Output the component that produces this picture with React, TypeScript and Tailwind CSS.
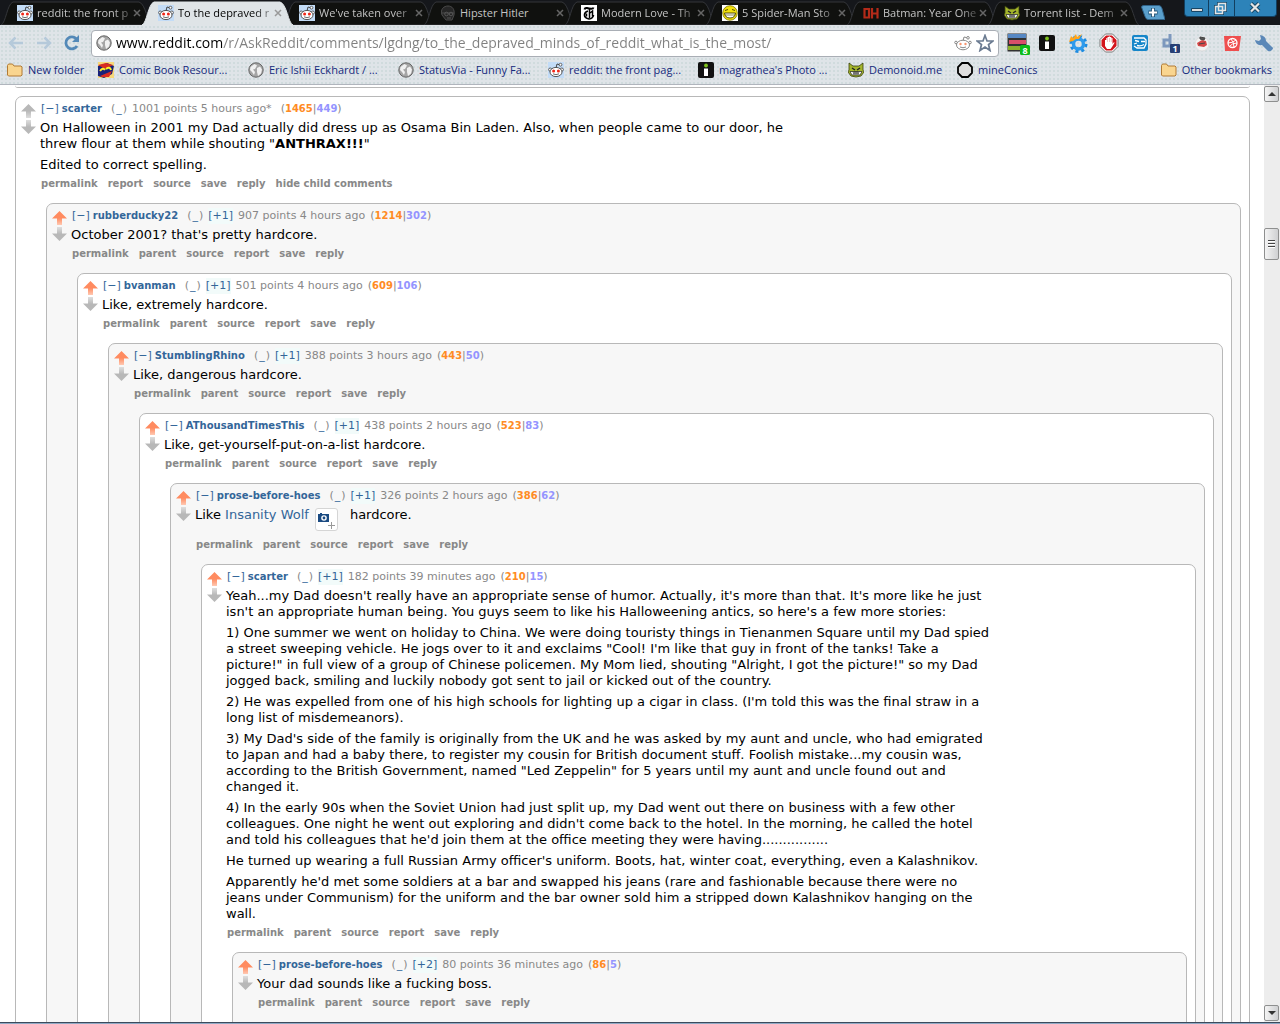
import type { ReactNode } from 'react';
import { clsx } from 'clsx';

interface CommentData {
  author: string;
  age: string;
  vote?: string;
  ups: number;
  downs: number;
  body: ReactNode[];
  actions: string[];
  child?: CommentData;
}

const rootActions = ['permalink', 'report', 'source', 'save', 'reply', 'hide child comments'];
const actions = ['permalink', 'parent', 'source', 'report', 'save', 'reply'];

const thread: CommentData = {
  author: 'scarter',
  age: '1001 points 5 hours ago*',
  ups: 1465,
  downs: 449,
  body: [
    <>
      On Halloween in 2001 my Dad actually did dress up as Osama Bin Laden. Also, when people came to our door, he
      <br />
      threw flour at them while shouting "<strong>ANTHRAX!!!</strong>"
    </>,
    'Edited to correct spelling.',
  ],
  actions: rootActions,
  child: {
    author: 'rubberducky22',
    age: '907 points 4 hours ago',
    vote: '+1',
    ups: 1214,
    downs: 302,
    body: ["October 2001? that's pretty hardcore."],
    actions,
    child: {
      author: 'bvanman',
      age: '501 points 4 hours ago',
      vote: '+1',
      ups: 609,
      downs: 106,
      body: ['Like, extremely hardcore.'],
      actions,
      child: {
        author: 'StumblingRhino',
        age: '388 points 3 hours ago',
        vote: '+1',
        ups: 443,
        downs: 50,
        body: ['Like, dangerous hardcore.'],
        actions,
        child: {
          author: 'AThousandTimesThis',
          age: '438 points 2 hours ago',
          vote: '+1',
          ups: 523,
          downs: 83,
          body: ['Like, get-yourself-put-on-a-list hardcore.'],
          actions,
          child: {
            author: 'prose-before-hoes',
            age: '326 points 2 hours ago',
            vote: '+1',
            ups: 386,
            downs: 62,
            body: [
              <span className="flex h-[27px] items-start">
                Like&nbsp;
                <a href="#wolf" className="text-[#369]">Insanity Wolf</a>
                <button aria-label="Show image" className="mt-px mr-3 ml-1.5 h-[23px] w-[23px] rounded-[3px] border border-[#d5d5d5] bg-white">
                  <svg viewBox="0 0 20 20" className="h-5 w-5">
                    <path d="M2 4h2V3h2v1h7v8H2z" fill="#1b4b82" />
                    <circle cx="8" cy="8" r="2.8" fill="#fff" />
                    <circle cx="8" cy="8" r="1.4" fill="#1b4b82" />
                    <path d="M15.5 12v7M12 15.5h7" stroke="#999" />
                  </svg>
                </button>
                hardcore.
              </span>,
            ],
            actions,
            child: {
              author: 'scarter',
              age: '182 points 39 minutes ago',
              vote: '+1',
              ups: 210,
              downs: 15,
              body: [
                "Yeah...my Dad doesn't really have an appropriate sense of humor. Actually, it's more than that. It's more like he just\nisn't an appropriate human being. You guys seem to like his Halloweening antics, so here's a few more stories:",
                '1) One summer we went on holiday to China. We were doing touristy things in Tienanmen Square until my Dad spied\na street sweeping vehicle. He jogs over to it and exclaims "Cool! I\'m like that guy in front of the tanks! Take a\npicture!" in full view of a group of Chinese policemen. My Mom lied, shouting "Alright, I got the picture!" so my Dad\njogged back, smiling and luckily nobody got sent to jail or kicked out of the country.',
                "2) He was expelled from one of his high schools for lighting up a cigar in class. (I'm told this was the final straw in a\nlong list of misdemeanors).",
                '3) My Dad\'s side of the family is originally from the UK and he was asked by my aunt and uncle, who had emigrated\nto Japan and had a baby there, to register my cousin for British document stuff. Foolish mistake...my cousin was,\naccording to the British Government, named "Led Zeppelin" for 5 years until my aunt and uncle found out and\nchanged it.',
                "4) In the early 90s when the Soviet Union had just split up, my Dad went out there on business with a few other\ncolleagues. One night he went out exploring and didn't come back to the hotel. In the morning, he called the hotel\nand told his colleagues that he'd join them at the office meeting they were having................",
                "He turned up wearing a full Russian Army officer's uniform. Boots, hat, winter coat, everything, even a Kalashnikov.",
                "Apparently he'd met some soldiers at a bar and swapped his jeans (rare and fashionable because there were no\njeans under Communism) for the uniform and the bar owner sold him a stripped down Kalashnikov hanging on the\nwall.",
              ],
              actions,
              child: {
                author: 'prose-before-hoes',
                age: '80 points 36 minutes ago',
                vote: '+2',
                ups: 86,
                downs: 5,
                body: ['Your dad sounds like a fucking boss.'],
                actions,
              },
            },
          },
        },
      },
    },
  },
};

function VoteArrow({ dir, active }: { dir: 'up' | 'down'; active?: boolean }) {
  const id = active ? 'arrow-on' : 'arrow-off';
  return (
    <button aria-label={dir === 'up' ? 'Upvote' : 'Downvote'} className="block h-[14px] w-[15px]">
      <svg viewBox="0 0 15 14" className={clsx('h-[14px] w-[15px]', dir === 'down' && 'rotate-180')}>
        <defs>
          <linearGradient id={id} x1="0" y1="0" x2="0" y2="1">
            <stop offset="0.5" stopColor={active ? '#ff8b60' : '#b8b8b8'} />
            <stop offset="1" stopColor={active ? '#ffc9b3' : '#dedede'} />
          </linearGradient>
        </defs>
        <path d="M7.5 0L15 7.5H10V14H5V7.5H0z" fill={`url(#${id})`} />
      </svg>
    </button>
  );
}

function Comment({ data, depth = 0 }: { data: CommentData; depth?: number }) {
  return (
    <div className={clsx('rounded-[7px] border border-[#b8b8b8]', depth % 2 ? 'bg-[#f7f7f7]' : 'bg-white')}>
      <div className="flex gap-1 pt-1 pl-[5px]">
        <div className="flex flex-col gap-0.5 pt-[3px]">
          <VoteArrow dir="up" active={depth > 0} />
          <VoteArrow dir="down" />
        </div>
        <div className="whitespace-nowrap">
          <div className="flex h-4 items-center gap-[5px] pl-px text-[11px] leading-4 text-[#888]">
            <span className="flex items-center gap-[3px]">
              <button className="text-[#369]">[−]</button>
              <a href="#author" className="mr-1 text-[10px] font-bold text-[#369]">{data.author}</a>
            </span>
            <span>(<a href="#tag" className="px-px text-[#369]">_</a>)</span>
            {data.vote && <span className="bg-[#f2fbfa] text-[#369]">[{data.vote}]</span>}
            <span>{data.age}</span>
            <span className={clsx(!data.vote && 'ml-1')}>
              (<b className="text-[10px] text-[#ff8b24]">{data.ups}</b>|<b className="text-[10px] text-[#9494ff]">{data.downs}</b>)
            </span>
          </div>
          <div className="mt-[3px] flex flex-col gap-[5px] text-[13px] leading-4 text-black">
            {data.body.map((p, i) => <div key={i} className="whitespace-pre-line">{p}</div>)}
          </div>
          <div className="mt-0.5 flex h-4 items-center gap-2.5 pl-px text-[10px] font-bold text-[#888]">
            {data.actions.map((a) => <a key={a} href={`#${a}`}>{a}</a>)}
          </div>
        </div>
      </div>
      <div className="mt-3 mr-2 ml-[30px]">
        {data.child ? <Comment data={data.child} depth={depth + 1} /> : <div className="h-10" />}
      </div>
    </div>
  );
}

type IconName = 'reddit' | 'hipster' | 'times' | 'smile' | 'oh' | 'demon' | 'folder' | 'cbr' | 'globe' | 'info' | 'circle';

function SiteIcon({ name, className = 'h-4 w-4' }: { name: IconName; className?: string }) {
  return (
    <svg viewBox="0 0 16 16" className={clsx('shrink-0', className)}>
      {name === 'reddit' && (
        <>
          <path fill="#c3dcf7" d="M0 0h16v16H0z" />
          <path d="M8 6l1-4 3 .8" fill="none" stroke="#444" />
          <circle cx="12.5" cy="2.7" r="1.4" fill="#fff" stroke="#444" strokeWidth=".8" />
          <circle cx="2.2" cy="7.6" r="1.6" fill="#fff" stroke="#444" strokeWidth=".8" />
          <circle cx="13.8" cy="7.6" r="1.6" fill="#fff" stroke="#444" strokeWidth=".8" />
          <ellipse cx="8" cy="10" rx="6" ry="4.6" fill="#fff" stroke="#444" strokeWidth=".9" />
          <circle cx="5.6" cy="9" r="1.5" fill="#f02818" />
          <circle cx="10.4" cy="9" r="1.5" fill="#f02818" />
          <path d="M5 11.8q3 1.8 6 0" fill="none" stroke="#444" strokeWidth=".8" />
        </>
      )}
      {name === 'hipster' && (
        <>
          <path d="M2 10C0 4 4 1 8 1s7 3 6 9l-2 5H6z" fill="#262626" stroke="#4b4b4b" />
          <path d="M2 8h12" stroke="#4b4b4b" />
          <circle cx="6.5" cy="9" r="1.8" fill="none" stroke="#555" />
          <circle cx="11" cy="9" r="1.8" fill="none" stroke="#555" />
          <path d="M7 13h4" stroke="#555" />
        </>
      )}
      {name === 'times' && (
        <>
          <path fill="#fff" d="M0 0h16v16H0z" />
          <path d="M3.5 4.5Q4 2.5 6 3t4 .8Q12 4 12.5 2.5" fill="none" stroke="#000" strokeWidth="2" />
          <path d="M8.5 4v9" stroke="#000" strokeWidth="1.5" />
          <path d="M7 6Q3.5 7 3.5 10T8 14q4-.5 4.5-4" fill="none" stroke="#000" strokeWidth="1.7" />
          <path d="M5.5 8.5v3M9 8l2.5-2v5.5" fill="none" stroke="#000" strokeWidth="1.5" />
        </>
      )}
      {name === 'smile' && (
        <>
          <path fill="#fff" d="M0 0h16v16H0z" />
          <circle cx="8" cy="8" r="7.3" fill="#f4e20c" stroke="#7a7000" strokeWidth=".8" />
          <path d="M3 5.5l3-1M13 5.5l-3-1" stroke="#554d00" />
          <path d="M2.5 8h11q-.5 5-5.5 5T2.5 8z" fill="#fff" stroke="#554d00" />
          <path d="M3 10h10" stroke="#554d00" strokeWidth=".7" />
        </>
      )}
      {name === 'oh' && <path d="M1.5 4H6v8.500H1.500zM9 3v10.500M14.500 3v10.500M9 8.500h5" fill="none" stroke="#b32a19" strokeWidth="2.2" />}
      {name === 'demon' && (
        <>
          <path d="M1 1l4 3h6l4-3v7l1 2-3 4-5 1-5-1-3-4 1-2z" fill="#a4b52c" stroke="#39400c" strokeWidth=".8" />
          <path d="M4 6l3 2M12 6L9 8" stroke="#222" strokeWidth="1.4" />
          <path d="M2 9.5h12l-2 3.5H4z" fill="#fff" stroke="#222" strokeWidth=".7" />
          <path d="M5 9.5l1 3 1-3 1 3 1-3 1 3 1-3" fill="none" stroke="#222" strokeWidth=".7" />
        </>
      )}
      {name === 'folder' && <path d="M.5 13V3.5L1.500 2h4l1.500 2h7l1 1v8l-1 1h-12.500z" fill="#f9d58f" stroke="#b27b35" />}
      {name === 'cbr' && (
        <>
          <path fill="#f8d878" d="M0 0h16v16H0z" />
          <path d="M0 4l9-3 7 3-2 8-8 4-6-2z" fill="#182178" />
          <path d="M0 3l8-2 7 2-8 4zM2 14l12-5-3 6H4z" fill="#d92d20" />
          <path d="M2 9q3-4 5-1M8 7q4-3 5 1" fill="none" stroke="#fff02a" strokeWidth="2" />
        </>
      )}
      {name === 'globe' && (
        <>
          <circle cx="8" cy="8" r="7.2" fill="#a5a5a5" stroke="#666" />
          <path d="M2.5 5l4-3L9 3.500 7 7l-2 .5L7 10l-1 3-2-3-2-2zM9 6l3-1.500 2 3-1 4L10 14l-1-4z" fill="#f0f0f0" />
        </>
      )}
      {name === 'info' && (
        <>
          <rect width="16" height="16" rx="2" fill="#111" />
          <circle cx="8" cy="3.5" r="1.9" fill="#7cc11c" />
          <path d="M6 6.5h4V14H6z" fill="#fff" />
        </>
      )}
      {name === 'circle' && <path d="M5 1h6l4 4v6l-4 4H5l-4-4V5z" fill="#ddd" stroke="#000" strokeWidth="1.8" />}
    </svg>
  );
}

const tabs: { icon: IconName; title: string; active?: boolean; fade?: boolean }[] = [
  { icon: 'reddit', title: 'reddit: the front p', fade: true },
  { icon: 'reddit', title: 'To the depraved r', active: true, fade: true },
  { icon: 'reddit', title: "We've taken over", fade: true },
  { icon: 'hipster', title: 'Hipster Hitler' },
  { icon: 'times', title: 'Modern Love - Th', fade: true },
  { icon: 'smile', title: '5 Spider-Man Sto', fade: true },
  { icon: 'oh', title: 'Batman: Year One', fade: true },
  { icon: 'demon', title: 'Torrent list - Dem', fade: true },
];

const bookmarks: { icon: IconName; title: string; width: string }[] = [
  { icon: 'folder', title: 'New folder', width: 'w-[91px]' },
  { icon: 'cbr', title: 'Comic Book Resour...', width: 'w-[150px]' },
  { icon: 'globe', title: 'Eric Ishii Eckhardt / ...', width: 'w-[150px]' },
  { icon: 'globe', title: 'StatusVia - Funny Fa...', width: 'w-[150px]' },
  { icon: 'reddit', title: 'reddit: the front pag...', width: 'w-[150px]' },
  { icon: 'info', title: "magrathea's Photo ...", width: 'w-[150px]' },
  { icon: 'demon', title: 'Demonoid.me', width: 'w-[109px]' },
  { icon: 'circle', title: 'mineConics', width: 'w-[100px]' },
];

function TabStrip() {
  return (
    <div className="flex h-[25px] bg-[#15171b] pl-[5px]">
      {tabs.map((t) => (
        <div key={t.title} className="relative flex w-[141px] shrink items-center pt-px pr-[3px] pl-3">
          <svg viewBox="0 0 151 24" preserveAspectRatio="none" className={clsx('absolute -left-1 top-px h-6 w-[151px]', t.active && 'z-10')}>
            <path
              d="M0 24C5 22 6 3 12 1H138C145 3 146 22 151 24z"
              fill={t.active ? '#dfe4e7' : '#10110f'}
              stroke={t.active ? '#dfe4e7' : '#34363a'}
            />
          </svg>
          <div className="relative z-20 flex w-full items-center">
            <SiteIcon name={t.icon} />
            <button
              className={clsx(
                'ml-1 flex-1 text-left text-[11px] leading-5 whitespace-nowrap',
                t.fade && '[mask-image:linear-gradient(90deg,#000_76px,#0003_96px)]',
                t.active ? 'text-black' : 'text-[#c4c4c4]',
              )}
            >
              {t.title}
            </button>
            <button aria-label={`Close ${t.title}`} className="h-3 w-3">
              <svg viewBox="0 0 12 12" className="h-3 w-3">
                <path d="M3 3l6 6M9 3L3 9" stroke={t.active ? '#999' : '#666'} strokeWidth="1.5" />
              </svg>
            </button>
          </div>
        </div>
      ))}
      <button aria-label="New tab" className="mt-[5px] ml-2 h-[15px] w-6 shrink-0">
        <svg viewBox="0 0 24 15" className="h-[15px] w-6">
          <path d="M3 .5h15q2 0 3 3l3 11H7q-2 0-3-3L.5 2q0-1.500 2.500-1.500z" fill="#5a9fcc" stroke="#2f6288" />
          <path d="M12 3v9M7.500 7.500h9" stroke="#1d4e70" strokeWidth="4" />
          <path d="M12 3.500v8M8 7.500h8" stroke="#fff" strokeWidth="2.2" />
        </svg>
      </button>
      <div className="mr-[3px] ml-auto flex h-[17px] shrink-0 overflow-hidden rounded-b border border-t-0 border-[#123f5f] bg-[#2d83b9]">
        <button aria-label="Minimize" className="w-6 border-r border-[#123f5f]">
          <svg viewBox="0 0 24 16" className="h-4 w-6"><path d="M6.500 8.500h11v3h-11z" fill="#ddd" stroke="#164564" /></svg>
        </button>
        <button aria-label="Restore" className="w-[26px] border-r border-[#123f5f]">
          <svg viewBox="0 0 24 16" className="h-4 w-6">
            <path d="M9.500 3.500h7v7h-7zM6.500 6.500h7v7h-7z" fill="#2d83b9" stroke="#164564" strokeWidth="3" />
            <path d="M9.500 3.500h7v7h-7zM6.500 6.500h7v7h-7z" fill="#2d83b9" stroke="#e5e5e5" strokeWidth="1.5" />
          </svg>
        </button>
        <button aria-label="Close window" className="w-[41px]">
          <svg viewBox="0 0 41 16" className="h-4 w-[41px]">
            <path d="M16 3.500l8 8M24 3.500l-8 8" stroke="#164564" strokeWidth="4" />
            <path d="M16 3.500l8 8M24 3.500l-8 8" stroke="#e5e5e5" strokeWidth="2.2" />
          </svg>
        </button>
      </div>
    </div>
  );
}

function ExtensionIcons() {
  const btn = 'h-5 w-5 shrink-0';
  return (
    <div className="flex items-center gap-[11px] pl-2">
      <button aria-label="Stacks, 8 new" className="h-6 w-6 shrink-0">
        <svg viewBox="0 0 24 24" className="h-6 w-6">
          <path d="M.5 2.500h19v18H.5z" fill="#333" />
          <path d="M1 3h18v4H1z" fill="#5688c4" />
          <path d="M2 9h17v4H2z" fill="#d94f69" />
          <path d="M1 15h18v4H1z" fill="#8caf2d" />
          <rect x="13" y="14" width="10" height="10" rx="1.5" fill="#0dbb18" />
          <text x="18" y="22.5" textAnchor="middle" fontSize="9" fontWeight="bold" fill="#fff">8</text>
        </svg>
      </button>
      <button aria-label="Info" className="-ml-[5px] flex h-5 w-5 shrink-0 items-center justify-center"><SiteIcon name="info" /></button>
      <button aria-label="Settings" className={btn}>
        <svg viewBox="0 0 20 20" className={btn}>
          <circle cx="10.5" cy="11" r="7.5" fill="none" stroke="#1c8be0" strokeWidth="3" strokeDasharray="3 2.9" />
          <circle cx="10.5" cy="11" r="5" fill="none" stroke="#2f9bec" strokeWidth="3.5" />
          <path d="M1 9L3 3l2 2 3-4 1 3 5-3-3 5H8L5 8z" fill="#ffa41b" />
        </svg>
      </button>
      <button aria-label="Adblock" className={btn}>
        <svg viewBox="0 0 20 20" className={btn}>
          <path d="M6.500 1h7L19 6.500v7L13.500 19h-7L1 13.500v-7z" fill="#fff" stroke="#777" />
          <path d="M7 2.500h6L17.500 7v6L13 17.500H7L2.500 13V7z" fill="#d3141b" />
          <path d="M6 7h1.300V5h1.200V4h1.300V3.500h1.200V4h1.300v1h1.200v6l1-1.500h1.200L13 14l-1.500 2H8l-2-3z" fill="#fff" />
          <path d="M8.500 5v4M10.500 5v4M12.300 5v4" stroke="#e58b8b" strokeWidth=".5" />
        </svg>
      </button>
      <button aria-label="Face" className={btn}>
        <svg viewBox="0 0 20 20" className={btn}>
          <rect x="2" y="2" width="16" height="16" rx="2" fill="#1686c9" />
          <path d="M4 5h10l2 2v4l-2 4H7l-3-2M5 7.500l4 1M11 8.500h4M4 11l3-1M7 12.500q4 1 7-1" fill="none" stroke="#fff" strokeWidth="1.3" />
        </svg>
      </button>
      <button aria-label="Delicious, 1 new" className={btn}>
        <svg viewBox="0 0 20 20" className={btn}>
          <path d="M9 1v13M9 7H3v6h6" fill="none" stroke="#7d98bd" strokeWidth="3" />
          <rect x="9" y="11" width="10" height="9" rx="1" fill="#273f75" />
          <text x="14" y="18.5" textAnchor="middle" fontSize="9" fontWeight="bold" fill="#fff">1</text>
        </svg>
      </button>
      <button aria-label="Stumble" className={btn}>
        <svg viewBox="0 0 20 20" className={btn}>
          <circle cx="10" cy="11" r="7" fill="#f2f2f2" stroke="#ddd" />
          <path d="M5 10l5-3 4 1 1 4-3 2-6-1z" fill="#d54646" />
          <path d="M8 4l5 1-1 2-4-1zM7 11l6-1" fill="#555" stroke="#444" />
        </svg>
      </button>
      <button aria-label="Dribbble" className={btn}>
        <svg viewBox="0 0 20 20" className={btn}>
          <path d="M1 3h17l-2 15H2z" fill="#ef4e4e" />
          <circle cx="9.5" cy="10" r="4.5" fill="none" stroke="#fff" strokeWidth="1.3" />
          <path d="M5 10q5 0 8-3M8 6q3 3 3 8M7 13q2-3 7-3" fill="none" stroke="#fff" />
        </svg>
      </button>
      <button aria-label="Wrench menu" className={btn}>
        <svg viewBox="0 0 20 20" className={btn}>
          <path d="M6 2l1 4-2 2-4-1q1 6 7 5l6 6q2 1 4-1t0-3l-6-6Q12 3 6 2z" fill="#5c88b8" />
        </svg>
      </button>
    </div>
  );
}

function Toolbar() {
  return (
    <div className="border-b border-[#b0b5bd] bg-[#dfe4e8] bg-[radial-gradient(#d0dbdd_1px,transparent_1px)] bg-size-[4px_4px]">
      <div className="flex h-9 items-center px-1.5">
        <div className="flex items-center gap-2">
          {[180, 0].map((deg) => (
            <button key={deg} aria-label={deg ? 'Back' : 'Forward'} className="h-5 w-5">
              <svg viewBox="0 0 20 20" className={clsx('h-5 w-5', deg === 180 && 'rotate-180')}>
                <path d="M3 10h13M10.500 4.500L16 10l-5.500 5.500" fill="none" stroke="#b5c9da" strokeWidth="2.5" />
              </svg>
            </button>
          ))}
          <button aria-label="Reload" className="h-5 w-5">
            <svg viewBox="0 0 20 20" className="h-5 w-5">
              <path d="M14.500 6A6 6 0 1 0 15 13" fill="none" stroke="#5489b8" strokeWidth="2.8" />
              <path d="M17 2v7h-7z" fill="#5489b8" />
            </svg>
          </button>
        </div>
        <div className="ml-[9px] flex h-[27px] flex-1 items-center rounded border border-[#a9aeb5] bg-white px-1">
          <SiteIcon name="globe" />
          <input
            aria-label="Address"
            defaultValue="www.reddit.com/r/AskReddit/comments/lgdng/to_the_depraved_minds_of_reddit_what_is_the_most/"
            className="ml-1 min-w-0 flex-1 bg-[linear-gradient(90deg,#000_107px,#808080_107px)] bg-clip-text text-sm text-transparent outline-none"
          />
          <button aria-label="Reddit page">
            <svg viewBox="0 0 18 16" className="h-4 w-[18px]" fill="#fff" stroke="#888">
              <path d="M9 6l1-4 3 .7" />
              <circle cx="14" cy="2.8" r="1.3" />
              <circle cx="2" cy="7.5" r="1.3" />
              <circle cx="16" cy="7.5" r="1.3" />
              <ellipse cx="9" cy="10" rx="6.5" ry="4.8" />
              <circle cx="6.5" cy="9" r="1.2" fill="#f7956f" stroke="none" />
              <circle cx="11.5" cy="9" r="1.2" fill="#f7956f" stroke="none" />
              <path d="M6 12q3 1.500 6 0" />
            </svg>
          </button>
          <button aria-label="Bookmark this page" className="ml-1">
            <svg viewBox="0 0 18 18" className="h-[18px] w-[18px]">
              <path d="M9 1.500l2 5.500h6l-4.500 3.500 1.500 6L9 13l-5 3.500 1.500-6L1 7h6z" fill="#fff" stroke="#6b7b91" strokeWidth="1.7" />
            </svg>
          </button>
        </div>
        <ExtensionIcons />
      </div>
      <div className="flex h-[23px] items-start overflow-hidden pr-2 pl-[7px] text-[11px] leading-[18px] text-[#15297c]">
        {bookmarks.map((b) => (
          <a key={b.title} href="#bookmark" className={clsx('flex shrink-0 items-center gap-[5px] whitespace-nowrap', b.width)}>
            <SiteIcon name={b.icon} />
            {b.title}
          </a>
        ))}
        <a href="#other" className="ml-auto flex items-center gap-[5px] whitespace-nowrap">
          <SiteIcon name="folder" />
          Other bookmarks
        </a>
      </div>
    </div>
  );
}

function ScrollBar() {
  const btn = 'flex h-4 w-[15px] shrink-0 items-center justify-center rounded-xs border border-[#8e8f8f] bg-linear-to-r from-[#f4f4f4] to-[#cfd0d2]';
  return (
    <div className="flex w-4 shrink-0 flex-col bg-[#ededed] py-px">
      <button aria-label="Scroll up" className={btn}>
        <svg viewBox="0 0 8 4" className="h-1 w-2"><path d="M4 0l4 4H0z" fill="#333" /></svg>
      </button>
      <div className="grow-[126]" />
      <div className="flex h-8 w-[15px] flex-col items-center justify-center gap-px rounded-xs border border-[#8e8f8f] bg-linear-to-r from-[#f4f4f4] to-[#cfd0d2]">
        {[0, 1, 2].map((i) => <span key={i} className="h-0.5 w-[7px] border-t border-[#444] bg-white" />)}
      </div>
      <div className="grow-[746]" />
      <button aria-label="Scroll down" className={btn}>
        <svg viewBox="0 0 8 4" className="h-1 w-2"><path d="M4 4l4-4H0z" fill="#333" /></svg>
      </button>
    </div>
  );
}

export default function App() {
  return (
    <div className="flex h-screen flex-col overflow-hidden bg-white">
      <header className="shrink-0 font-['Open_Sans','Noto_Sans',sans-serif]">
        <TabStrip />
        <Toolbar />
      </header>
      <div className="flex min-h-0 flex-1">
        <main className="min-w-0 flex-1 overflow-hidden pr-3.5 pl-[15px] font-[Verdana,'DejaVu_Sans',sans-serif]">
          <div className="mb-2 h-[3px] rounded-b-[7px] border-b border-[#b8b8b8]" />
          <Comment data={thread} />
        </main>
        <ScrollBar />
      </div>
      <footer className="h-0.5 shrink-0 border-t border-[#3c4a5c] bg-[#8fa9c4]" />
    </div>
  );
}
